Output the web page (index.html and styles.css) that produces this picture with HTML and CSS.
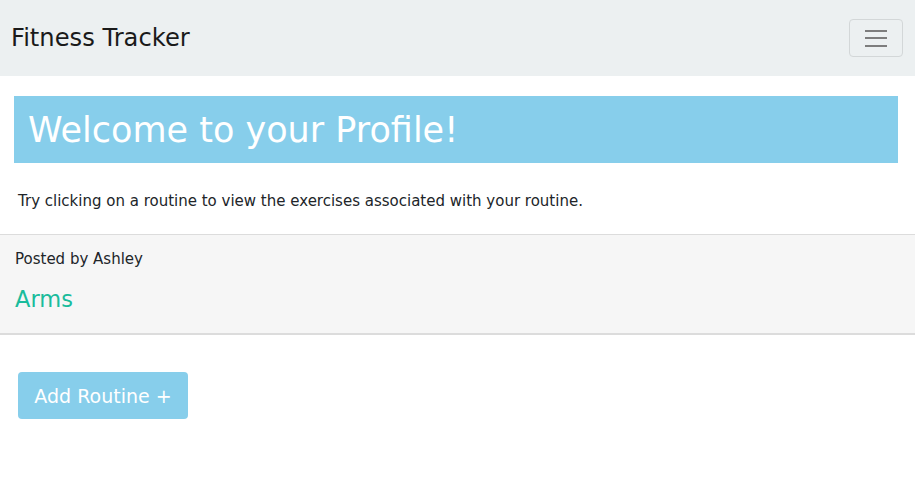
FILE: index.html
```html
<!DOCTYPE html>
<html>
<head>
<meta charset="utf-8">
<link rel="stylesheet" href="styles.css">
</head>
<body>
<nav class="navbar">
  <span class="brand">Fitness Tracker</span>
  <button class="toggler" aria-label="menu">
    <span class="bar"></span><span class="bar"></span><span class="bar"></span>
  </button>
</nav>
<main class="content">
  <h1 class="banner">Welcome to your Profile!</h1>
  <p class="hint">Try clicking on a routine to view the exercises associated with your routine.</p>
</main>
<section class="routine">
  <div class="author">Posted by Ashley</div>
  <a class="routine-name" href="#">Arms</a>
</section>
<div class="actions">
  <button class="add-btn">Add Routine +</button>
</div>
</body>
</html>
```
FILE: styles.css
```css
* { box-sizing: border-box; }
body {
  margin: 0;
  font-family: "DejaVu Sans", Verdana, sans-serif;
  color: #212529;
  background: #fff;
}
.navbar {
  height: 76px;
  background: #ecf0f1;
  display: flex;
  align-items: center;
  justify-content: space-between;
  padding: 0 12px 0 11px;
}
.brand {
  font-size: 24.2px;
  color: #1a1a1a;
}
.toggler {
  width: 54px;
  height: 38px;
  border: 1px solid #d3d7d8;
  border-radius: 4px;
  background: transparent;
  display: flex;
  flex-direction: column;
  align-items: center;
  justify-content: center;
  gap: 5.5px;
  padding: 0;
}
.bar {
  display: block;
  width: 22px;
  height: 2px;
  background: #7d7d7d;
}
.content {
  padding: 20px 17px 0 14px;
}
.banner {
  margin: 0;
  background: #87ceeb;
  color: #fff;
  font-weight: normal;
  font-size: 35px;
  height: 67px;
  display: flex;
  align-items: center;
  padding-left: 14px;
}
.hint {
  margin: 28px 0 0 4px;
  font-size: 15px;
  line-height: 20px;
  height: 43px;
}
.routine {
  margin-top: 0;
  background: #f6f6f6;
  border-top: 1px solid #dcdcdc;
  border-bottom: 2px solid #dcdcdc;
  padding: 14px 15px 0;
  height: 101px;
}
.author {
  font-size: 15px;
  line-height: 20px;
}
.routine-name {
  display: block;
  margin-top: 15px;
  font-size: 22.5px;
  line-height: 30px;
  color: #1abc9c;
  text-decoration: none;
}
.actions {
  padding: 37px 18px;
}
.add-btn {
  font-family: inherit;
  width: 170px;
  height: 47px;
  background: #87ceeb;
  color: #fff;
  border: none;
  border-radius: 4px;
  font-size: 19px;
  padding: 0;
}
```
